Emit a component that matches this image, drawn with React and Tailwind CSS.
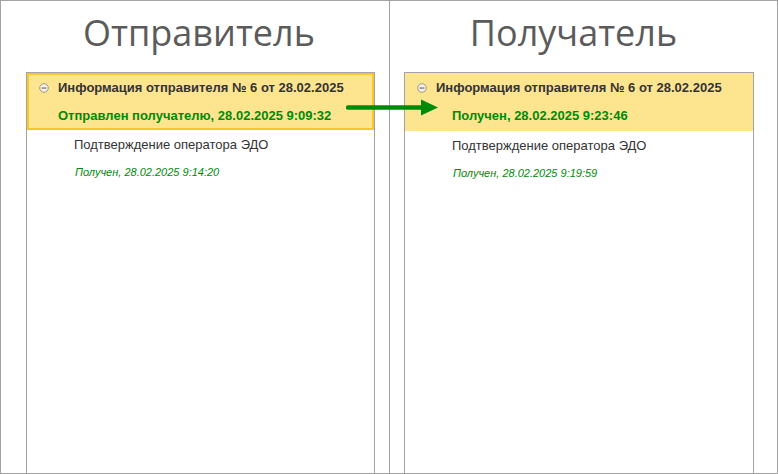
import React from "react";

const Circle = () => (
  <svg width="10" height="10" viewBox="0 0 10 10" className="shrink-0">
    <circle cx="5" cy="5" r="4.3" fill="#f4f0e6" stroke="#a09a8a" strokeWidth="1" />
    <rect x="2.6" y="4.5" width="4.8" height="1.1" fill="#6a6458" />
  </svg>
);

function Panel({ selBorder, status, statusIndent, sub }) {
  return (
    <div className="w-[350px] flex-1 border-l border-r border-t border-[#a3a3a3] bg-white">
      <div
        className={
          selBorder
            ? "bg-[#fde590] border-2 border-[#f6c829] h-[57px]"
            : "bg-[#fde590] border-2 border-[#fde590] h-[58px]"
        }
      >
        <div className="flex items-center h-[25px] pl-[10px]">
          <Circle />
          <span className="ml-[9px] text-[13px] font-bold text-[#333] leading-none">
            Информация отправителя № 6 от 28.02.2025
          </span>
        </div>
        <div
          className={
            statusIndent
              ? "h-[30px] flex items-center pl-[45px] text-[13px] font-bold text-[#008a0a] leading-none"
              : "h-[30px] flex items-center pl-[29px] text-[13px] font-bold text-[#008a0a] leading-none"
          }
        >
          {status}
        </div>
      </div>
      <div className="pl-[47px] pt-[5px] text-[13px] text-[#333] leading-none h-[23px] flex items-center">
        Подтверждение оператора ЭДО
      </div>
      <div className="pl-[48px] pt-[9px] text-[11px] italic text-[#008a0a] leading-none h-[29px] flex items-center">
        {sub}
      </div>
    </div>
  );
}

export default function App() {
  return (
    <div
      className="relative w-[778px] h-[474px] border border-[#a3a3a3] bg-white flex"
      style={{ fontFamily: '"Liberation Sans", Arial, sans-serif' }}
    >
      <div className="w-[389px] h-full border-r border-[#a3a3a3] flex flex-col">
        <div
          className="h-[71px] flex items-center justify-center pl-[8px] pb-[8px] text-[36px] leading-none text-[#5b5b5b]"
          style={{ fontFamily: '"Open Sans", "Liberation Sans", sans-serif' }}
        >
          Отправитель
        </div>
        <div className="flex-1 flex pl-[25px]">
          <Panel
            selBorder
            status="Отправлен получателю, 28.02.2025 9:09:32"
            sub="Получен, 28.02.2025 9:14:20"
          />
          <div className="w-[14px]" />
        </div>
      </div>
      <div className="flex-1 h-full flex flex-col">
        <div
          className="h-[71px] flex items-center justify-center pr-[20px] pb-[8px] text-[36px] leading-none text-[#5b5b5b]"
          style={{ fontFamily: '"Open Sans", "Liberation Sans", sans-serif' }}
        >
          Получатель
        </div>
        <div className="flex-1 flex pl-[14px] pr-[23px]">
          <Panel
            statusIndent
            status="Получен, 28.02.2025 9:23:46"
            sub="Получен, 28.02.2025 9:19:59"
          />
        </div>
      </div>
      <svg
        className="absolute left-[345px] top-[97px]"
        width="94"
        height="19"
        viewBox="0 0 94 19"
      >
        <line x1="2" y1="9.5" x2="78" y2="9.5" stroke="#008a0a" strokeWidth="4.5" strokeLinecap="round" />
        <polygon points="75,1.5 92,9.5 75,17.5" fill="#008a0a" />
      </svg>
    </div>
  );
}
